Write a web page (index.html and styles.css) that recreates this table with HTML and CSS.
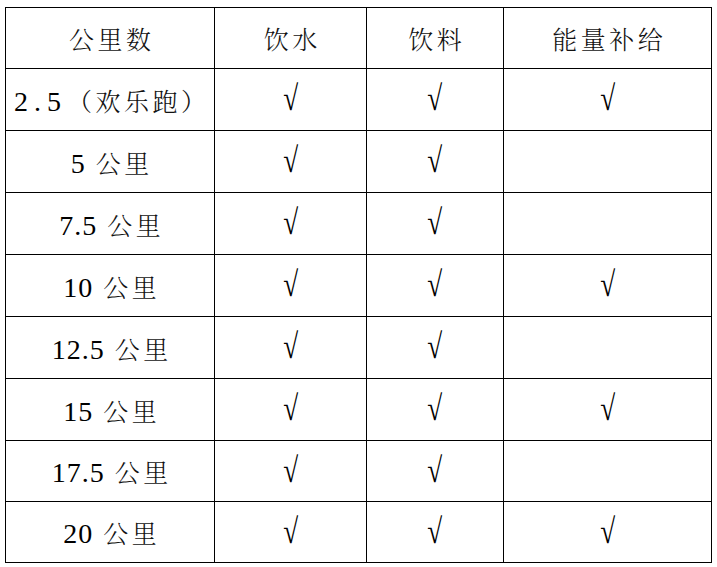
FILE: index.html
```html
<!DOCTYPE html>
<html lang="zh-CN">
<head>
<meta charset="utf-8">
<title>补给表</title>
<link rel="stylesheet" href="styles.css">
</head>
<body>
<div class="sheet">
  <div class="cell head"><span class="txt">公里数</span></div>
  <div class="cell head"><span class="txt">饮水</span></div>
  <div class="cell head"><span class="txt">饮料</span></div>
  <div class="cell head"><span class="txt">能量补给</span></div>

  <div class="cell"><span class="txt"><span class="num wide">2.5</span>（欢乐跑）</span></div>
  <div class="cell"><span class="tick">√</span></div>
  <div class="cell"><span class="tick">√</span></div>
  <div class="cell"><span class="tick">√</span></div>

  <div class="cell"><span class="txt"><span class="num">5</span> 公里</span></div>
  <div class="cell"><span class="tick">√</span></div>
  <div class="cell"><span class="tick">√</span></div>
  <div class="cell"></div>

  <div class="cell"><span class="txt"><span class="num">7.5</span> 公里</span></div>
  <div class="cell"><span class="tick">√</span></div>
  <div class="cell"><span class="tick">√</span></div>
  <div class="cell"></div>

  <div class="cell"><span class="txt"><span class="num">10</span> 公里</span></div>
  <div class="cell"><span class="tick">√</span></div>
  <div class="cell"><span class="tick">√</span></div>
  <div class="cell"><span class="tick">√</span></div>

  <div class="cell"><span class="txt"><span class="num">12.5</span> 公里</span></div>
  <div class="cell"><span class="tick">√</span></div>
  <div class="cell"><span class="tick">√</span></div>
  <div class="cell"></div>

  <div class="cell"><span class="txt"><span class="num">15</span> 公里</span></div>
  <div class="cell"><span class="tick">√</span></div>
  <div class="cell"><span class="tick">√</span></div>
  <div class="cell"><span class="tick">√</span></div>

  <div class="cell"><span class="txt"><span class="num">17.5</span> 公里</span></div>
  <div class="cell"><span class="tick">√</span></div>
  <div class="cell"><span class="tick">√</span></div>
  <div class="cell"></div>

  <div class="cell"><span class="txt"><span class="num">20</span> 公里</span></div>
  <div class="cell"><span class="tick">√</span></div>
  <div class="cell"><span class="tick">√</span></div>
  <div class="cell"><span class="tick">√</span></div>
</div>
</body>
</html>
```
FILE: styles.css
```css
html, body {
  margin: 0;
  padding: 0;
  background: #ffffff;
}

body {
  padding: 7px 0 0 5px;
}

.sheet {
  display: grid;
  grid-template-columns: 209px 152px 137px 208px;
  grid-template-rows: 61px 62px 62px 62px 62px 62px 62px 61px 61px;
  width: max-content;
  border-left: 1px solid #000;
  border-top: 1px solid #000;
  font-family: "Noto Serif CJK SC", "Liberation Serif", "Noto Sans CJK SC", serif;
  font-size: 25px;
  font-weight: 300;
  color: #111;
}

.cell {
  box-sizing: border-box;
  border-right: 1px solid #000;
  border-bottom: 1px solid #000;
  display: flex;
  align-items: center;
  justify-content: center;
  white-space: nowrap;
  overflow: visible;
}

.txt {
  letter-spacing: 3.5px;
  padding-left: 3.5px;
  white-space: pre;
}

.num {
  font-family: "Liberation Serif", serif;
  font-size: 28px;
  letter-spacing: 1px;
  color: #000;
}

.num.wide {
  letter-spacing: 6px;
}

.tick {
  font-family: "Liberation Serif", serif;
  font-size: 32px;
  display: inline-block;
  transform: scale(0.85, 1.1);
  color: #000;
  margin-top: -2px;
}
```
